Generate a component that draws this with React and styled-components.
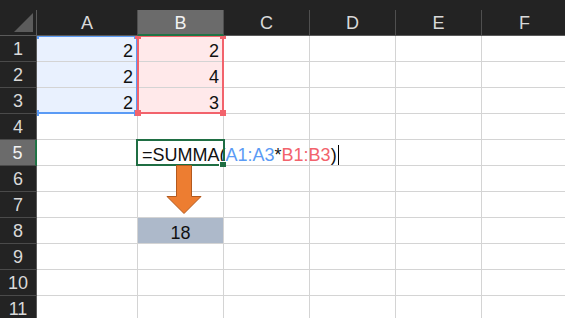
import React from 'react'
import styled, { createGlobalStyle } from 'styled-components';

const GlobalStyle = createGlobalStyle`
  html, body {
    margin: 0;
    padding: 0;
    background: #232323;
    overflow: hidden;
  }
  body {
    font-family: "Liberation Sans", Arial, sans-serif;
  }
`;

const COLS = [
  { name: 'A', width: 101 },
  { name: 'B', width: 86 },
  { name: 'C', width: 86 },
  { name: 'D', width: 86 },
  { name: 'E', width: 86 },
  { name: 'F', width: 86 },
];
const ROW_COUNT = 11;
const ROW_H = 26;
const HEAD_W = 37;
const TOP = 10;
const HEAD_H = 26;

// cells with content / fill, keyed by address
const cells = {
  A1: { value: 2, tone: 'blue' },
  A2: { value: 2, tone: 'blue' },
  A3: { value: 2, tone: 'blue' },
  B1: { value: 2, tone: 'pink' },
  B2: { value: 4, tone: 'pink' },
  B3: { value: 3, tone: 'pink' },
  B8: { value: 18, tone: 'result', center: true },
};

const tones = {
  blue: '#e9f1fe',
  pink: '#ffe9ea',
  result: '#adb9ca',
};

// pixel helpers for overlays (page coordinates)
const colLeft = (i) => HEAD_W + COLS.slice(0, i).reduce((s, c) => s + c.width, 0);
const rowTop = (r) => TOP + HEAD_H + (r - 1) * ROW_H;

const Sheet = styled.div`
  position: relative;
  padding-top: ${TOP}px;
  width: 565px;
  height: 318px;
  overflow: hidden;
  background: #232323;
`;

const Grid = styled.div`
  display: grid;
  grid-template-columns: ${HEAD_W}px ${COLS.map((c) => c.width + 'px').join(' ')};
  grid-template-rows: ${HEAD_H}px repeat(${ROW_COUNT}, ${ROW_H}px);
  background: #fff;
`;

const Corner = styled.div`
  position: relative;
  z-index: 3;
  background: #232323;
  border-right: 1px solid #5a5a5a;
  border-bottom: 1px solid #5a5a5a;
  box-sizing: border-box;
  display: flex;
  align-items: flex-end;
  justify-content: flex-end;
  padding: 0 3px 3px 0;
`;

const CornerMark = styled.div`
  width: 19px;
  height: 19px;
  background: #5c5c5c;
  clip-path: polygon(100% 0, 100% 100%, 0 100%);
`;

const ColHead = styled.div`
  position: relative;
  z-index: 3;
  box-sizing: border-box;
  background: ${({ $active }) => ($active ? '#6b6b6b' : '#232323')};
  color: ${({ $active }) => ($active ? '#f2f2f2' : '#d9d9d9')};
  border-right: 1px solid #4f4f4f;
  border-bottom: ${({ $active }) => ($active ? '2px solid #1f7345' : '1px solid #5a5a5a')};
  font-size: 18px;
  display: flex;
  align-items: center;
  justify-content: center;
  padding-top: 2px;
`;

const RowHead = styled.div`
  position: relative;
  z-index: 3;
  box-sizing: border-box;
  background: ${({ $active }) => ($active ? '#6b6b6b' : '#232323')};
  color: ${({ $active }) => ($active ? '#f2f2f2' : '#d9d9d9')};
  border-right: ${({ $active }) => ($active ? '2px solid #1f7345' : '1px solid #5a5a5a')};
  border-bottom: 1px solid #4a4a4a;
  font-size: 18px;
  display: flex;
  align-items: center;
  justify-content: center;
  padding-top: 2px;
`;

const Cell = styled.div`
  box-sizing: border-box;
  background: ${({ $tone }) => tones[$tone] || '#fff'};
  border-right: 1px solid #d4d4d4;
  border-bottom: 1px solid #d4d4d4;
  color: #111;
  font-size: 18px;
  line-height: 20px;
  padding: 5px 4px 0 4px;
  text-align: ${({ $center }) => ($center ? 'center' : 'right')};
  white-space: nowrap;
`;

const EditCell = styled(Cell)`
  position: relative;
  z-index: 1;
  text-align: left;
  padding-left: 4px;
  overflow: visible;
`;

const Ref = styled.span`
  color: ${({ $color }) => $color};
`;

const Caret = styled.span`
  display: inline-block;
  width: 1px;
  height: 20px;
  margin-left: 1px;
  background: #000;
  vertical-align: -4px;
`;

const RangeBox = styled.div`
  position: absolute;
  z-index: 2;
  box-sizing: border-box;
  border: 2px solid ${({ $color }) => $color};
  pointer-events: none;
`;

const Handle = styled.span`
  position: absolute;
  width: 6px;
  height: 6px;
  background: ${({ $color }) => $color};
  ${({ $v }) => ($v === 'top' ? 'top: -4px;' : 'bottom: -4px;')}
  ${({ $h }) => ($h === 'left' ? 'left: -4px;' : 'right: -4px;')}
`;

const Selection = styled.div`
  position: absolute;
  z-index: 2;
  box-sizing: border-box;
  border: 2px solid #1f6e43;
  pointer-events: none;
`;

const FillHandle = styled.span`
  position: absolute;
  right: -3px;
  bottom: -3px;
  width: 6px;
  height: 5px;
  background: #1f6e43;
  border-left: 1px solid #fff;
  border-top: 1px solid #fff;
`;

const ArrowSvg = styled.svg`
  position: absolute;
  z-index: 2;
  left: 166px;
  top: 165px;
`;

// a coloured reference frame; in the first column its left edge sits under the row headings
const Range = ({ color, col, row, cols, rows }) => {
  const left = colLeft(col) - (col === 0 ? 2 : 1);
  const top = rowTop(row) - 1;
  const width = COLS.slice(col, col + cols).reduce((s, c) => s + c.width, 0) + (col === 0 ? 2 : 1);
  const height = rows * ROW_H + 1;
  return (
    <RangeBox $color={color} style={{ left, top, width, height }}>
      <Handle $color={color} $v="top" $h="left" />
      <Handle $color={color} $v="top" $h="right" />
      <Handle $color={color} $v="bottom" $h="left" />
      <Handle $color={color} $v="bottom" $h="right" />
    </RangeBox>
  );
};

const BLUE = '#5b9bf5';
const RED = '#f2636c';

const App = () => {
  const rows = Array.from({ length: ROW_COUNT }, (_, i) => i + 1);
  return (
    <>
      <GlobalStyle />
      <Sheet>
        <Grid>
          <Corner>
            <CornerMark />
          </Corner>
          {COLS.map((c) => (
            <ColHead key={c.name} $active={c.name === 'B'}>{c.name}</ColHead>
          ))}
          {rows.map((r) => (
            <React.Fragment key={r}>
              <RowHead $active={r === 5}>{r}</RowHead>
              {COLS.map((c) => {
                const addr = c.name + r;
                if (addr === 'B5') {
                  return (
                    <EditCell key={addr}>
                      =SUMMA(<Ref $color={BLUE}>A1:A3</Ref>*<Ref $color={RED}>B1:B3</Ref>)<Caret />
                    </EditCell>
                  );
                }
                const cell = cells[addr];
                return (
                  <Cell key={addr} $tone={cell?.tone} $center={cell?.center}>
                    {cell?.value}
                  </Cell>
                );
              })}
            </React.Fragment>
          ))}
        </Grid>

        <Range color={BLUE} col={0} row={1} cols={1} rows={3} />
        <Range color={RED} col={1} row={1} cols={1} rows={3} />

        <Selection style={{ left: colLeft(1) - 2, top: rowTop(5) - 1, width: 89, height: 27 }}>
          <FillHandle />
        </Selection>

        <ArrowSvg width="36" height="50" viewBox="0 0 36 50">
          <path
            d="M10.5 0.5 H25.5 V31.5 H35 L18 48.5 L1 31.5 H10.5 Z"
            fill="#ed7d31"
            stroke="#b3591d"
            strokeWidth="1"
            strokeLinejoin="miter"
          />
        </ArrowSvg>
      </Sheet>
    </>
  );
};

export default App;
